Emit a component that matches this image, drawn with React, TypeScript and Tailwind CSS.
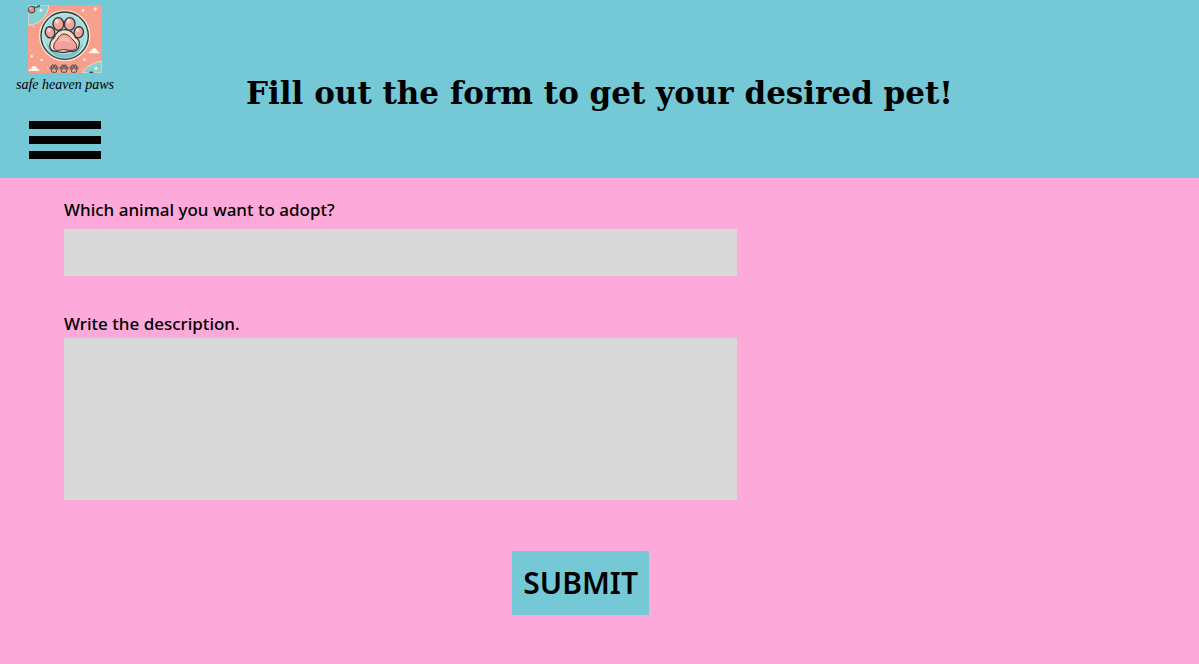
import type { FormEvent } from 'react';

function Cloud({ x, y }: { x: number; y: number }) {
  return (
    <path
      transform={`translate(${x} ${y})`}
      fill="#fff5e8"
      d="M0 16c0-5 3-8 8-7 0-6 5-9 10-8 5 0 7 4 7 8 4-1 7 2 7 7z"
    />
  );
}

function Sparkle({ x, y }: { x: number; y: number }) {
  return (
    <path
      transform={`translate(${x} ${y})`}
      fill="#fff8ee"
      d="M0-7 2-2 7 0 2 2 0 7-2 2-7 0-2-2z"
    />
  );
}

function SmallPaw({ x }: { x: number }) {
  return (
    <g transform={`translate(${x} 207)`} stroke="#3f4443" strokeWidth="2.5" fill="#d9a596">
      <ellipse cx="-9" cy="-3" rx="3" ry="4" />
      <ellipse cx="-4" cy="-9" rx="3" ry="4" />
      <ellipse cx="4" cy="-9" rx="3" ry="4" />
      <ellipse cx="9" cy="-3" rx="3" ry="4" />
      <path d="M0-3c4 0 8 6 8 9 0 5-5 4-8 4s-8 1-8-4c0-3 4-9 8-9z" />
    </g>
  );
}

function Logo() {
  return (
    <svg viewBox="84 15 222 204" className="h-[68px] w-[74px]" role="img" aria-label="Safe heaven paws logo">
      <rect x="84" y="15" width="222" height="204" fill="#f79f8c" />
      <g stroke="#f8b09b" strokeWidth="1">
        <path d="M260 15v170M268 15v170M276 15v170M284 15v170M292 15v170M84 150h222M84 160h222" />
      </g>
      <path d="M84 15h62c-1 32-28 61-62 61z" fill="#8ccfd3" stroke="#f9d9c5" strokeWidth="3" />
      <circle cx="95" cy="29" r="10" fill="#ee8886" stroke="#303c42" strokeWidth="3" />
      <circle cx="91" cy="25" r="3" fill="#ffd9d1" />
      <path d="M102 21c5 2 15 1 18-6M111 17l8 4" fill="none" stroke="#303c42" strokeWidth="3" />
      <path d="M246 219c12-20 35-33 60-35v35z" fill="#8ccfd3" stroke="#f9d9c5" strokeWidth="3" />
      <path d="M267 219c1-5 10-7 14 0z" fill="#38454a" />
      <Sparkle x={123} y={31} />
      <Sparkle x={249} y={31} />
      <Sparkle x={286} y={27} />
      <Sparkle x={288} y={205} />
      <Cloud x={266} y={144} />
      <Cloud x={86} y={197} />
      <g fill="#ffeadb">
        <circle cx="95" cy="169" r="4" />
        <circle cx="125" cy="180" r="4" />
        <circle cx="253" cy="179" r="4" />
        <circle cx="143" cy="203" r="2" />
        <circle cx="245" cy="207" r="2" />
        <circle cx="100" cy="80" r="2" />
      </g>
      <circle cx="194" cy="107" r="77" fill="#fae3cf" />
      <circle cx="194" cy="107" r="71" fill="#a8dcdc" stroke="#263e44" strokeWidth="4" />
      <circle cx="194" cy="107" r="65" fill="none" stroke="#c9e9e1" strokeWidth="3" />
      <path d="M139 126c9 17 25 38 55 37 31 0 47-17 55-36-2 26-25 47-55 47-31 0-52-22-55-48z" fill="#82bfca" />
      <path
        d="M191 89c18-2 30 10 36 24 8 3 14 13 10 25-3 12-13 18-24 16-10-2-14 4-23 3-9 1-16-3-24-3-15 0-20-14-15-26 2-7 6-11 11-15 5-12 14-23 29-24z"
        fill="#f9ddc4"
        stroke="#35393b"
        strokeWidth="4"
      />
      <path
        d="M192 102c13 0 21 12 30 21 13 13 10 27-5 28-9 1-16-2-26-2s-14 3-21 2c-12-2-11-17-3-27 8-9 12-22 25-22z"
        fill="#f4a19b"
        stroke="#3c3536"
        strokeWidth="3"
      />
      <path d="M174 126c3-9 9-15 18-15 10 0 17 11 23 19-10-6-29-10-41-4z" fill="#f9bbb2" />
      <g fill="#f2a49c" stroke="#34373a" strokeWidth="4">
        <ellipse cx="150" cy="97" rx="14" ry="17" transform="rotate(-16 150 97)" />
        <ellipse cx="175" cy="72" rx="16" ry="19" transform="rotate(-4 175 72)" />
        <ellipse cx="209" cy="72" rx="16" ry="19" transform="rotate(5 209 72)" />
        <ellipse cx="236" cy="97" rx="14" ry="17" transform="rotate(15 236 97)" />
      </g>
      <g fill="#ffd5cb">
        <ellipse cx="147" cy="90" rx="5" ry="6" />
        <ellipse cx="171" cy="64" rx="6" ry="7" />
        <ellipse cx="206" cy="64" rx="6" ry="7" />
        <ellipse cx="233" cy="90" rx="5" ry="6" />
      </g>
      <SmallPaw x={162} />
      <SmallPaw x={192} />
      <SmallPaw x={222} />
    </svg>
  );
}

export default function App() {
  const handleSubmit = (event: FormEvent<HTMLFormElement>) => event.preventDefault();

  return (
    <div className="min-h-screen bg-[#fda9d9] font-['Noto_Sans',sans-serif] text-black">
      <header className="grid grid-cols-[1fr_auto_1fr] items-start bg-[#75c8d5] pt-[5px] pb-[19px]">
        <div className="ml-4 flex w-fit flex-col items-center">
          <a href="#" className="flex flex-col items-center">
            <Logo />
            <span className="font-['Liberation_Serif',serif] text-sm leading-6 whitespace-nowrap italic">
              safe heaven paws
            </span>
          </a>
          <button type="button" aria-label="Open menu" className="mt-6 flex w-[72px] flex-col gap-[7px]">
            <span className="h-2 w-full bg-black" />
            <span className="h-2 w-full bg-black" />
            <span className="h-2 w-full bg-black" />
          </button>
        </div>
        <h1 className="pt-16 font-['DejaVu_Serif',serif] text-[31px] leading-12 font-bold">
          Fill out the form to get your desired pet!
        </h1>
      </header>

      <main className="px-4 pt-5 sm:pl-16">
        <form onSubmit={handleSubmit} className="flex max-w-[673px] flex-col">
          <label htmlFor="animal" className="text-[17px] leading-6 font-medium">
            Which animal you want to adopt?
          </label>
          <input id="animal" type="text" className="mt-[7px] h-[47px] bg-[#d9d9d9] px-3 text-[17px] outline-none" />
          <label htmlFor="description" className="mt-9 text-[17px] leading-6 font-medium">
            Write the description.
          </label>
          <textarea
            id="description"
            className="mt-0.5 h-[162px] resize-none bg-[#d9d9d9] p-3 text-[17px] outline-none"
          />
          <button
            type="submit"
            className="mt-[51px] mr-[88px] self-end bg-[#75c8d5] px-[11px] py-3 text-[30px] leading-10 font-semibold"
          >
            SUBMIT
          </button>
        </form>
      </main>
    </div>
  );
}
